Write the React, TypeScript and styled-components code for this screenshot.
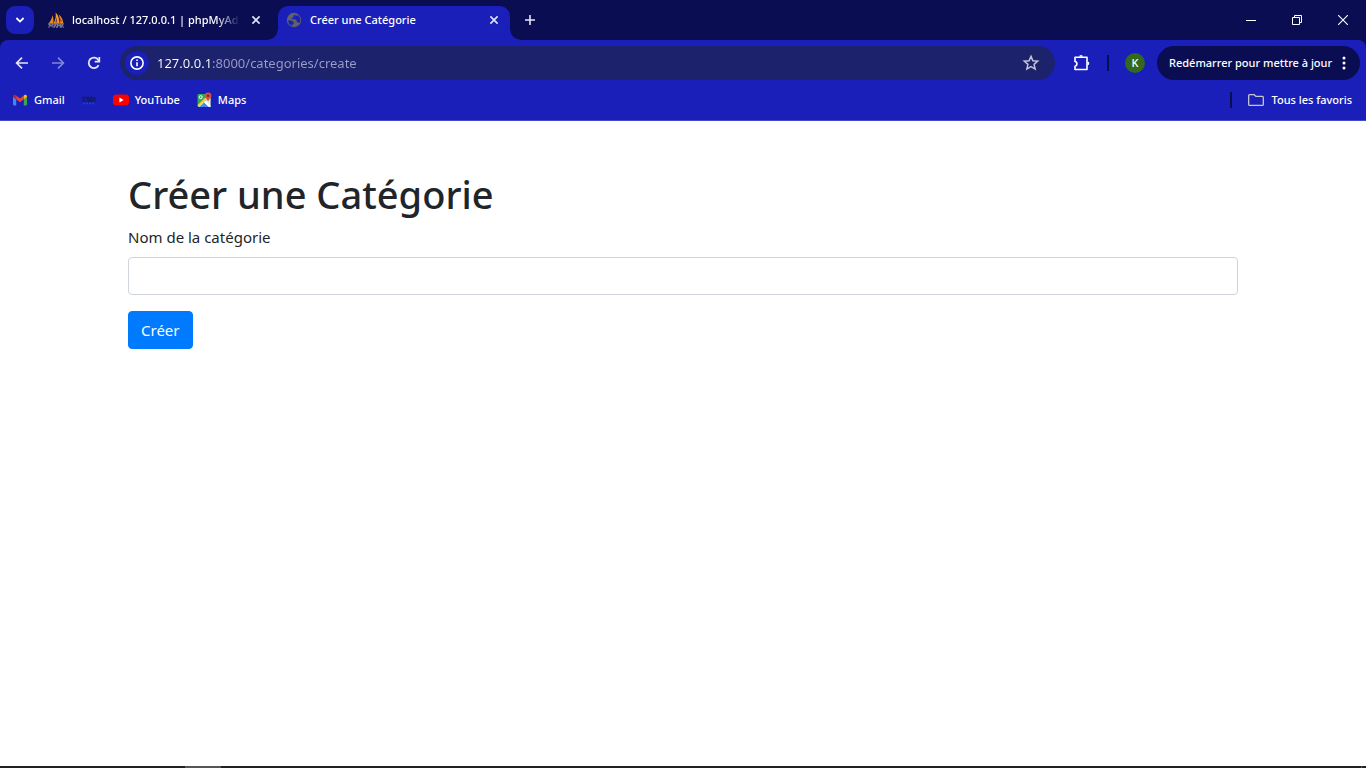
import React from "react";
import styled, { createGlobalStyle } from "styled-components";

const colors = {
  frame: "#0a0d52",
  bar: "#191fb8",
  field: "#1c226c",
  line: "#4349c6",
  icon: "#e4e5f6",
};

const GlobalStyle = createGlobalStyle`
  *, *::before, *::after { box-sizing: border-box; }
  body {
    margin: 0;
    background: #fff;
    color: #212529;
    font-family: "Segoe UI", "Noto Sans", "Open Sans", sans-serif;
    font-size: 15px;
    line-height: 24px;
  }
  button, input { font: inherit; }
  svg { display: block; flex: none; }
`;

const Screen = styled.div`
  display: flex;
  flex-direction: column;
  min-height: 100vh;
`;

const Browser = styled.header`
  background: ${colors.frame};
  color: #fff;
  font-size: 11px;
  font-weight: 500;
  line-height: 16px;
`;

const TabStrip = styled.div`
  display: flex;
  align-items: center;
  height: 40px;
  padding-left: 6px;
`;

const PlainButton = styled.button`
  display: flex;
  align-items: center;
  justify-content: center;
  flex: none;
  padding: 0;
  border: 0;
  background: none;
  color: ${colors.icon};
`;

const TabSearch = styled(PlainButton)`
  width: 28px;
  height: 28px;
  border-radius: 9px;
  background: ${colors.bar};
`;

const Tab = styled.div<{ $active?: boolean }>`
  position: relative;
  display: flex;
  align-items: center;
  align-self: flex-end;
  gap: 8px;
  width: ${(p) => (p.$active ? "232px" : "244px")};
  height: 34px;
  padding: ${(p) => (p.$active ? "0 8px 6px" : "0 14px 6px")};
  border-radius: 10px 10px 0 0;
  background: ${(p) => (p.$active ? colors.bar : "transparent")};

  &::before,
  &::after {
    content: "";
    display: ${(p) => (p.$active ? "block" : "none")};
    position: absolute;
    bottom: 0;
    width: 10px;
    height: 10px;
  }
  &::before {
    left: -10px;
    background: radial-gradient(circle at 0 0, transparent 9px, ${colors.bar} 10px);
  }
  &::after {
    right: -10px;
    background: radial-gradient(circle at 100% 0, transparent 9px, ${colors.bar} 10px);
  }
`;

const TabTitle = styled.span<{ $fade?: boolean }>`
  flex: 1;
  min-width: 0;
  overflow: hidden;
  white-space: nowrap;
  mask-image: ${(p) =>
    p.$fade ? "linear-gradient(to right, #000 calc(100% - 24px), transparent)" : "none"};
`;

const TabClose = styled(PlainButton)`
  width: 16px;
  height: 16px;
`;

const NewTab = styled(PlainButton)`
  width: 28px;
  height: 28px;
  margin-left: 6px;
`;

const WindowControls = styled.div`
  display: flex;
  margin-left: auto;
`;

const WindowButton = styled(PlainButton)`
  width: 46px;
  height: 40px;
  color: #fff;
`;

const Chrome = styled.div`
  background: ${colors.bar};
  border-radius: 8px 8px 0 0;
  border-bottom: 1px solid ${colors.line};
`;

const Toolbar = styled.div`
  display: flex;
  align-items: center;
  height: 46px;
  padding: 0 6px 0 8px;
`;

const NavButton = styled(PlainButton)`
  width: 28px;
  height: 28px;
  margin-right: 8px;
  &:disabled { color: #8286d9; }
`;

const Omnibox = styled.div`
  display: flex;
  align-items: center;
  flex: 1;
  height: 34px;
  margin-left: 4px;
  padding: 0 10px 0 5px;
  border-radius: 17px;
  background: ${colors.field};
`;

const SiteInfo = styled(PlainButton)`
  width: 24px;
  height: 24px;
  border-radius: 50%;
  background: ${colors.bar};
`;

/* The host part is white, the port and path are dimmed. */
const Address = styled.input`
  flex: 1;
  min-width: 0;
  margin-left: 8px;
  padding: 0;
  border: 0;
  outline: 0;
  font-size: 13px;
  font-weight: 400;
  line-height: 20px;
  color: transparent;
  background: linear-gradient(to right, #fff 55px, #9c9ec4 55px);
  background-clip: text;
`;

const StarButton = styled(PlainButton)`
  width: 28px;
  height: 28px;
  color: #c4c5d6;
`;

const Extensions = styled(PlainButton)`
  width: 28px;
  height: 28px;
  margin: 0 12px;
  color: #fff;
`;

const Divider = styled.span`
  width: 2px;
  height: 16px;
  background: ${colors.frame};
`;

const Profile = styled(PlainButton)`
  width: 20px;
  height: 20px;
  margin: 0 12px 0 16px;
  border-radius: 50%;
  background: #33691e;
  color: #fff;
`;

const Relaunch = styled(PlainButton)`
  justify-content: space-between;
  width: 203px;
  height: 34px;
  padding: 0 14px 0 12px;
  border-radius: 17px;
  background: ${colors.frame};
  color: #fff;
  white-space: nowrap;
`;

const Bookmarks = styled.nav`
  display: flex;
  align-items: center;
  gap: 16px;
  height: 34px;
  padding: 0 14px 6px 12px;
`;

const Bookmark = styled.a`
  display: flex;
  align-items: center;
  gap: 6px;
  color: #fff;
  text-decoration: none;
  white-space: nowrap;
`;

const AllBookmarks = styled(PlainButton)`
  gap: 8px;
  color: #fff;
`;

const Favorites = styled.div`
  display: flex;
  align-items: center;
  gap: 16px;
  margin-left: auto;
`;

const Page = styled.main`
  flex: 1;
  width: 100%;
  max-width: 1140px;
  margin: 0 auto;
  padding: 48px 15px;
`;

const Title = styled.h1`
  margin: 0 0 6px;
  font-size: 38px;
  font-weight: 500;
  line-height: 50px;
`;

const Field = styled.div`
  margin-bottom: 16px;
`;

const Label = styled.label`
  display: block;
  margin-bottom: 8px;
`;

const TextInput = styled.input`
  display: block;
  width: 100%;
  height: 38px;
  padding: 6px 12px;
  border: 1px solid #ced4da;
  border-radius: 4px;
  background: #fff;
  color: #495057;
`;

const Submit = styled.button`
  height: 38px;
  padding: 6px 12px;
  border: 1px solid #007bff;
  border-radius: 4px;
  background: #007bff;
  color: #fff;
`;

const Taskbar = styled.footer`
  display: flex;
  justify-content: space-between;
  height: 2px;
  padding: 0 4px 0 185px;
  background: #202124;
`;

const TaskbarItem = styled.span<{ $width: number }>`
  width: ${(p) => p.$width}px;
  background: #55565a;
`;

const CloseIcon = () => (
  <svg width="10" height="10" viewBox="0 0 10 10" stroke="currentColor" strokeWidth="1.6">
    <path d="M1.4 1.4l7.2 7.2M8.6 1.4L1.4 8.6" />
  </svg>
);

const MyAdminIcon = () => (
  <svg width="16" height="16" viewBox="0 0 16 16">
    <path d="M.6 11.400C2.800 9 4 6.300 4.300 3.200c1.300 2.500 1.500 5.500.9 8.200z" fill="#e58a1a" />
    <path d="M5.300 11.400C7.600 8.200 8.100 4.500 7.600.4c3 2.900 4 6.900 3.400 11z" fill="#f79a2a" />
    <path d="M11.300 11.400c.9-3 .8-6.200-.7-9 3.100 2.200 4.500 5.400 4.800 9z" fill="#ee8722" />
    <path d="M7.200 10.500l1.500-5.500.6 5.500zM12.300 9.500l-.2-3.800 1.900 3.800z" fill="#7a4632" />
    <path d="M.8 15.800l.8-3.300 1.500 2 1.500-2 .6 3.300M6 15.800l1.300-3.300 1.300 3.300M9.400 15.800v-3.300l1.500 1.700 1.400-1.700v3.300M13.200 15.800l1-3.300 1.200 3.300" fill="none" stroke="#8587a6" />
    <path d="M0 12h16" stroke="#9b8f95" strokeWidth="1" />
  </svg>
);

const GlobeIcon = () => (
  <svg width="16" height="16" viewBox="0 0 16 16">
    <circle cx="8" cy="8" r="7.200" fill="#5f6368" />
    <path d="M9.300 2.200L7.500 4v1.700H5.800v1.600h3.700l1.300 1.400v1.600h1.500l1.200.8c.5-.9.800-1.900.8-3 0-2.300-1.300-4.300-3.200-5.300v.8L9.600 4.600M2 8.400l3.500.1 2.200 1.700v1.500l-1.300.6v1.500C3.900 13.200 2.100 11 2 8.400z" fill={colors.bar} />
  </svg>
);

const BackIcon = ({ flip = false }: { flip?: boolean }) => (
  <svg width="16" height="16" viewBox="0 0 16 16" fill="none" stroke="currentColor" strokeWidth="1.700">
    <path d={flip ? "M2 8h11M8 2.600L13.400 8 8 13.400" : "M14 8H3M8 2.600L2.600 8 8 13.400"} />
  </svg>
);

const ReloadIcon = () => (
  <svg width="16" height="16" viewBox="0 0 16 16" fill="none" stroke="currentColor" strokeWidth="1.800">
    <path d="M12.600 10.100A5.200 5.200 0 1 1 12.300 5l1 1.300" />
    <path d="M13.300 2v4.700H8.700" />
  </svg>
);

const InfoIcon = () => (
  <svg width="16" height="16" viewBox="0 0 16 16" fill="none" stroke="#fff" strokeWidth="1.600">
    <circle cx="8" cy="8" r="6.100" />
    <path d="M8 7.200v4M8 4.600v1.500" />
  </svg>
);

const StarIcon = () => (
  <svg width="18" height="18" viewBox="0 0 18 18" fill="none" stroke="currentColor" strokeWidth="1.500">
    <path d="M9 2.400l1.900 4.400 4.800.41-3.640 3.150 1.090 4.690L9 12.570l-4.150 2.480 1.090-4.690L2.300 7.210 7.100 6.800z" />
  </svg>
);

const PuzzleIcon = () => (
  <svg width="18" height="18" viewBox="0 0 18 18">
    <path d="M3 3.200h12v12.300H3v-3.300c2.600-.3 2.600-4.400 0-4.700z" fill="none" stroke="currentColor" strokeWidth="1.600" strokeLinejoin="round" />
    <path d="M7.200 2.700a1.800 1.800 0 0 1 3.600 0zM15.500 7.600a1.800 1.800 0 0 1 0 3.600z" fill="currentColor" />
  </svg>
);

const DotsIcon = () => (
  <svg width="4" height="16" viewBox="0 0 4 16" fill="currentColor">
    <circle cx="2" cy="3" r="1.500" />
    <circle cx="2" cy="8" r="1.500" />
    <circle cx="2" cy="13" r="1.500" />
  </svg>
);

const GmailIcon = () => (
  <svg width="16" height="16" viewBox="0 0 16 16">
    <path d="M1 4.500l3.200 2.400v6.600H2.100A1.100 1.100 0 0 1 1 12.400z" fill="#4285f4" />
    <path d="M15 4.500l-3.200 2.400v6.600h2.100a1.100 1.100 0 0 0 1.100-1.100z" fill="#34a853" />
    <path d="M4.200 3.600L8 6.500l3.800-2.900v3.700L8 10.200 4.200 7.300z" fill="#ea4335" />
    <path d="M1 4.500c0-1.700 1.600-2 2.500-1.400l.7.500v3.700L1 4.900z" fill="#c5221f" />
    <path d="M15 4.500c0-1.700-1.600-2-2.500-1.400l-.7.500v3.700L15 4.900z" fill="#fbbc04" />
  </svg>
);

const CsgiIcon = () => (
  <svg width="16" height="16" viewBox="0 0 16 16" fill="none" stroke="#161b5c" strokeWidth="1.300">
    <path d="M4.900 5.500H2.200v3.600h2.700M8.400 5.500H6v1.700h2.200v1.900H5.800M12.300 5.500H9.600v3.600h2.600V7.500h-1M14 5v4.700" />
    <path d="M2 11.500h12" stroke="#1545c0" strokeWidth="1.500" strokeDasharray="2 1" />
  </svg>
);

const YouTubeIcon = () => (
  <svg width="16" height="16" viewBox="0 0 16 16">
    <rect y="2.400" width="16" height="11.200" rx="3" fill="#f00" />
    <path d="M6.400 5.600v4.800L10.600 8z" fill="#fff" />
  </svg>
);

const MapsIcon = () => (
  <svg width="16" height="16" viewBox="0 0 16 16">
    <rect x="1.500" y="2" width="13" height="13" rx="1" fill="#34a853" />
    <path d="M2.500 15L14.500 4v10a1 1 0 0 1-1 1z" fill="#e6e9ec" />
    <path d="M3.600 15l4.600-4.600 4.800 4.600z" fill="#4285f4" />
    <path d="M1.500 13.300L12.500 2.500l1.500 1.700L3.200 15z" fill="#fbd04b" />
    <path d="M8.200 10.400L13 15h1.500v-1.300L9.500 9.100z" fill="#fff" />
    <circle cx="4.700" cy="5.200" r="1.500" fill="none" stroke="#fff" />
    <path d="M8.800 3.800a3.300 3.300 0 1 1 6.600 0c0 2.200-2.600 3.200-3.300 6-.7-2.800-3.300-3.800-3.300-6z" fill="#dd4b3e" />
    <circle cx="12.100" cy="3.800" r="1.200" fill="#7f231c" />
  </svg>
);

const FolderIcon = () => (
  <svg width="16" height="16" viewBox="0 0 16 16" fill="none" stroke="#c7c7cc" strokeWidth="1.300">
    <path d="M1.600 2.700h4.600l1.700 1.700h6.500q.9 0 .9.900v7.100q0 .9-.9.900H1.600q-.9 0-.9-.9V3.600q0-.9.900-.9z" />
  </svg>
);

export default function App() {
  return (
    <Screen>
      <GlobalStyle />
      <Browser>
        <TabStrip>
          <TabSearch aria-label="Rechercher dans les onglets">
            <svg width="10" height="8" viewBox="0 0 10 8" fill="none" stroke="#fff" strokeWidth="1.800">
              <path d="M1.400 2L5 5.600 8.600 2" />
            </svg>
          </TabSearch>
          <Tab>
            <MyAdminIcon />
            <TabTitle $fade>localhost / 127.0.0.1 | phpMyAd</TabTitle>
            <TabClose aria-label="Fermer l'onglet"><CloseIcon /></TabClose>
          </Tab>
          <Tab $active>
            <GlobeIcon />
            <TabTitle>Créer une Catégorie</TabTitle>
            <TabClose aria-label="Fermer l'onglet"><CloseIcon /></TabClose>
          </Tab>
          <NewTab aria-label="Nouvel onglet">
            <svg width="12" height="12" viewBox="0 0 12 12" stroke="currentColor" strokeWidth="1.600">
              <path d="M6 1v10M1 6h10" />
            </svg>
          </NewTab>
          <WindowControls>
            <WindowButton aria-label="Réduire">
              <svg width="10" height="10" viewBox="0 0 10 10" stroke="currentColor"><path d="M0 5.500h10" /></svg>
            </WindowButton>
            <WindowButton aria-label="Restaurer">
              <svg width="10" height="10" viewBox="0 0 10 10" fill="none" stroke="currentColor">
                <path d="M.5 2.500h7v7h-7zM2.500 2.500v-2h7v7h-2" />
              </svg>
            </WindowButton>
            <WindowButton aria-label="Fermer">
              <svg width="10" height="10" viewBox="0 0 10 10" stroke="currentColor" strokeWidth="1.100">
                <path d="M0 0l10 10M10 0L0 10" />
              </svg>
            </WindowButton>
          </WindowControls>
        </TabStrip>
        <Chrome>
          <Toolbar>
            <NavButton aria-label="Retour"><BackIcon /></NavButton>
            <NavButton aria-label="Avancer" disabled><BackIcon flip /></NavButton>
            <NavButton aria-label="Actualiser"><ReloadIcon /></NavButton>
            <Omnibox>
              <SiteInfo aria-label="Informations sur le site"><InfoIcon /></SiteInfo>
              <Address aria-label="Adresse" defaultValue="127.0.0.1:8000/categories/create" />
              <StarButton aria-label="Ajouter aux favoris"><StarIcon /></StarButton>
            </Omnibox>
            <Extensions aria-label="Extensions"><PuzzleIcon /></Extensions>
            <Divider />
            <Profile aria-label="Profil K">K</Profile>
            <Relaunch>
              Redémarrer pour mettre à jour
              <DotsIcon />
            </Relaunch>
          </Toolbar>
          <Bookmarks>
            <Bookmark href="#gmail"><GmailIcon />Gmail</Bookmark>
            <Bookmark href="#csgi" aria-label="CSGI"><CsgiIcon /></Bookmark>
            <Bookmark href="#youtube"><YouTubeIcon />YouTube</Bookmark>
            <Bookmark href="#maps"><MapsIcon />Maps</Bookmark>
            <Favorites>
              <Divider />
              <AllBookmarks><FolderIcon />Tous les favoris</AllBookmarks>
            </Favorites>
          </Bookmarks>
        </Chrome>
      </Browser>
      <Page>
        <Title>Créer une Catégorie</Title>
        <form onSubmit={(e) => e.preventDefault()}>
          <Field>
            <Label htmlFor="name">Nom de la catégorie</Label>
            <TextInput id="name" name="name" type="text" />
          </Field>
          <Submit type="submit">Créer</Submit>
        </form>
      </Page>
      <Taskbar>
        <TaskbarItem $width={36} />
        <TaskbarItem $width={1} />
      </Taskbar>
    </Screen>
  );
}
